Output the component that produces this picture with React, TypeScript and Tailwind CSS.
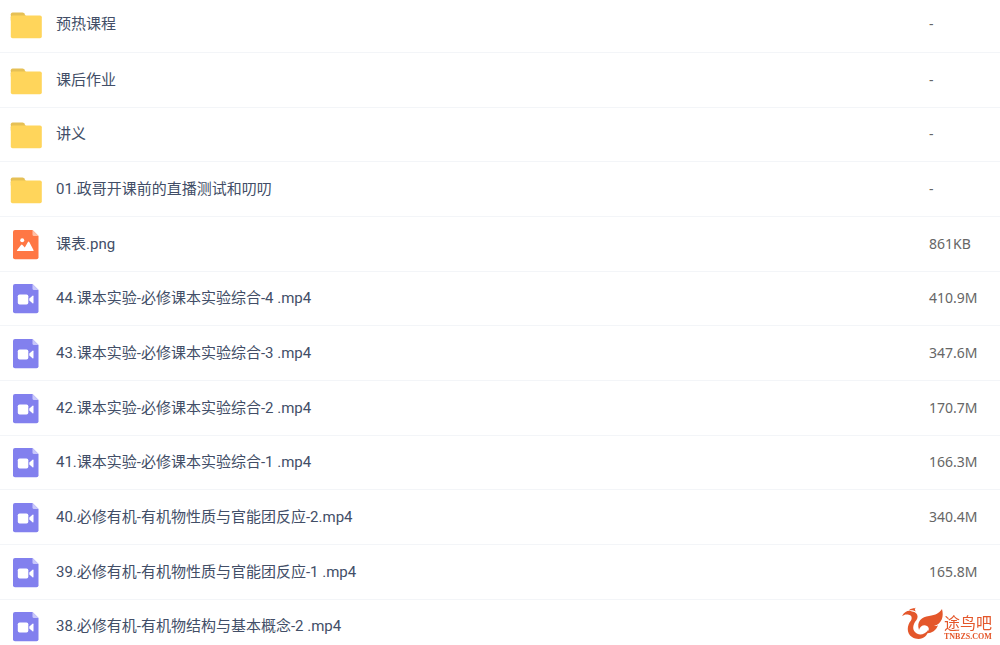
import React from "react";

type Kind = "folder" | "image" | "video";

type FileEntry = {
  name: string;
  kind: Kind;
  size: string;
};

const files: FileEntry[] = [
  { name: "预热课程", kind: "folder", size: "-" },
  { name: "课后作业", kind: "folder", size: "-" },
  { name: "讲义", kind: "folder", size: "-" },
  { name: "01.政哥开课前的直播测试和叨叨", kind: "folder", size: "-" },
  { name: "课表.png", kind: "image", size: "861KB" },
  { name: "44.课本实验-必修课本实验综合-4 .mp4", kind: "video", size: "410.9M" },
  { name: "43.课本实验-必修课本实验综合-3 .mp4", kind: "video", size: "347.6M" },
  { name: "42.课本实验-必修课本实验综合-2 .mp4", kind: "video", size: "170.7M" },
  { name: "41.课本实验-必修课本实验综合-1 .mp4", kind: "video", size: "166.3M" },
  { name: "40.必修有机-有机物性质与官能团反应-2.mp4", kind: "video", size: "340.4M" },
  { name: "39.必修有机-有机物性质与官能团反应-1 .mp4", kind: "video", size: "165.8M" },
  { name: "38.必修有机-有机物结构与基本概念-2 .mp4", kind: "video", size: "" },
];

const FolderIcon = () => (
  <svg width="32" height="32" viewBox="0 0 32 32" aria-hidden="true">
    <path d="M2.500 4.500h10q1 0 1.600.8L15.500 7.500v5H.8V6.200q0-1.700 1.700-1.700z" fill="#e6c055" />
    <rect x="0.800" y="7.500" width="31" height="22.800" rx="1.800" fill="#ffd55b" />
  </svg>
);

const ImageIcon = () => (
  <svg width="32" height="32" viewBox="0 0 32 32" aria-hidden="true">
    <path d="M5 2h17.500l6 6v21.300a2 2 0 0 1-2 2H5a2 2 0 0 1-2-2V4a2 2 0 0 1 2-2z" fill="#ff7744" />
    <path d="M22.500 2l6 6h-4.500a1.500 1.500 0 0 1-1.500-1.500z" fill="#ffc0a6" />
    <circle cx="12.200" cy="12.300" r="2" fill="#fff" />
    <path d="M7.400 23q-.8 0-.4-.8l4-5.200q.8-.8 1.500 0l2.300 2.600 3-5.400q.8-1.200 1.600 0l4.200 8q.3.800-.5.800z" fill="#fff" />
  </svg>
);

const VideoIcon = () => (
  <svg width="32" height="32" viewBox="0 0 32 32" aria-hidden="true">
    <path d="M5 2h17.500l6 6v21.300a2 2 0 0 1-2 2H5a2 2 0 0 1-2-2V4a2 2 0 0 1 2-2z" fill="#8280ee" />
    <path d="M22.500 2l6 6h-4.500a1.500 1.500 0 0 1-1.500-1.500z" fill="#c9c8fa" />
    <rect x="7.800" y="12.500" width="10.500" height="10" rx="1.800" fill="#fff" />
    <path d="M19.300 16.500l3.200-2.800q1-.5 1 .5v6.600q0 1-1 .5l-3.200-2.800z" fill="#fff" />
  </svg>
);

const icons = {
  folder: FolderIcon,
  image: ImageIcon,
  video: VideoIcon,
};

const FileRow = ({ file }: { file: FileEntry }) => {
  const Icon = icons[file.kind];

  return (
    <tr className="h-[55px] nth-[3n]:h-[54px] border-b border-[#f3f5f8]">
      <td className="p-0 pl-[10px] align-middle">
        <div className="flex items-center gap-x-[14px]">
          <Icon />
          <span className="text-[15px] leading-5 text-[#424e67]">
            {file.name}
          </span>
        </div>
      </td>
      <td className="w-[71px] p-0 align-middle font-['Noto_Sans',sans-serif] text-sm leading-5 text-[#666]">
        {file.size}
      </td>
    </tr>
  );
};

const Watermark = () => (
  <div className="fixed bottom-1 right-2 flex items-end text-[#e4572b]">
    <svg width="42" height="34" viewBox="0 0 42 34" fill="currentColor" aria-hidden="true">
      <path d="M0 9C3 4 7 3 10 4.500c5 .5 7 4.500 4.500 8.500C11 17 10 22 13 25c3 4 10 3 13-2 0 8-9 11.500-16 7C4 26 5 18 9 13.500 11 9 8 7.500 5 7.500 3 7.300 2 8 0 9z" />
      <path d="M7 3.500C9 .5 12 2 14 .5 12.500 2 12.500 3 14 4.500 11 3 9 3 7 3.500z" />
      <path d="M40 2c2 7 0 15-8 17q2 .3 4-.8C34 24 28 27 24 26c3-2 4-5 1-7s-7 0-8 4c-3-9 3-13 10-14s10-3 13-7z" />
    </svg>
    <div className="flex flex-col">
      <span className="text-base leading-[18px]">途鸟吧</span>
      <span className="font-['Liberation_Serif',serif] text-[8px] font-bold leading-2">
        TNBZS.COM
      </span>
    </div>
  </div>
);

export default function App() {
  return (
    <main className="h-screen overflow-hidden bg-white font-[Roboto,'Noto_Sans_CJK_SC',sans-serif]">
      {/* list is scrolled slightly past its first row */}
      <table className="-mt-[3px] w-full border-collapse text-left">
        <tbody>
          {files.map((file) => (
            <FileRow key={file.name} file={file} />
          ))}
        </tbody>
      </table>
      <Watermark />
    </main>
  );
}
